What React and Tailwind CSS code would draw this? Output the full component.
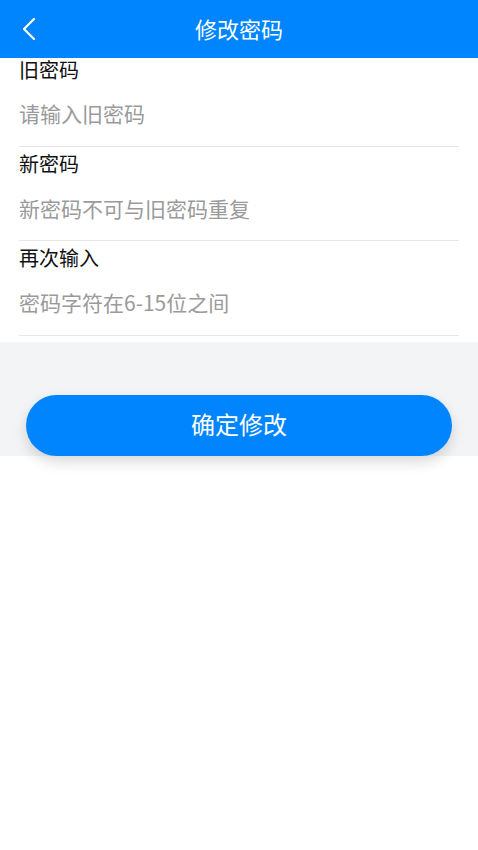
import React from 'react';

const fields = [
  { label: '旧密码', placeholder: '请输入旧密码' },
  { label: '新密码', placeholder: '新密码不可与旧密码重复' },
  { label: '再次输入', placeholder: '密码字符在6-15位之间' },
];

function App() {
  return (
    <div
      className="min-h-screen bg-white"
      style={{ fontFamily: '"Noto Sans CJK SC", "Noto Sans", sans-serif' }}
    >
      <header className="h-[58px] bg-[#0085ff] flex items-center relative">
        <button className="absolute left-[18px] top-[14px] w-[22px] h-[30px] flex items-center justify-center">
          <svg width="14" height="24" viewBox="0 0 14 24" fill="none">
            <path d="M12 2 L2 12 L12 22" stroke="white" strokeWidth="2.2" strokeLinecap="round" strokeLinejoin="round" />
          </svg>
        </button>
        <h1 className="flex-1 text-center text-white text-[22px] leading-[56px] pb-[2px]">修改密码</h1>
      </header>

      <div className="px-[19px] -mt-[4px]">
        {fields.map((f, i) => (
          <div
            key={i}
            className={
              'border-b border-[#e6e6e6] ' +
              (i === 0 ? 'pt-[2px] pb-[19px]' : i === 1 ? 'pt-[3px] pb-[18px]' : 'pt-[3px] pb-[19px]')
            }
          >
            <div className="text-[20px] leading-[28px] text-[#111]">{f.label}</div>
            <input
              className={
                'w-full text-[21px] leading-[28px] h-[28px] outline-none bg-transparent placeholder:text-[#9a9a9a] ' +
                (i === 0 ? 'mt-[15px]' : 'mt-[16px]')
              }
              placeholder={f.placeholder}
            />
          </div>
        ))}
      </div>

      <div className="mt-[6px] bg-[#f3f4f6] h-[114px] pt-[53px] px-[26px]">
        <button className="w-full h-[61px] pb-[3px] rounded-full bg-[#0085ff] text-white text-[24px] shadow-[0_6px_14px_rgba(0,0,0,0.15)]">
          确定修改
        </button>
      </div>
    </div>
  );
}

export default App;
